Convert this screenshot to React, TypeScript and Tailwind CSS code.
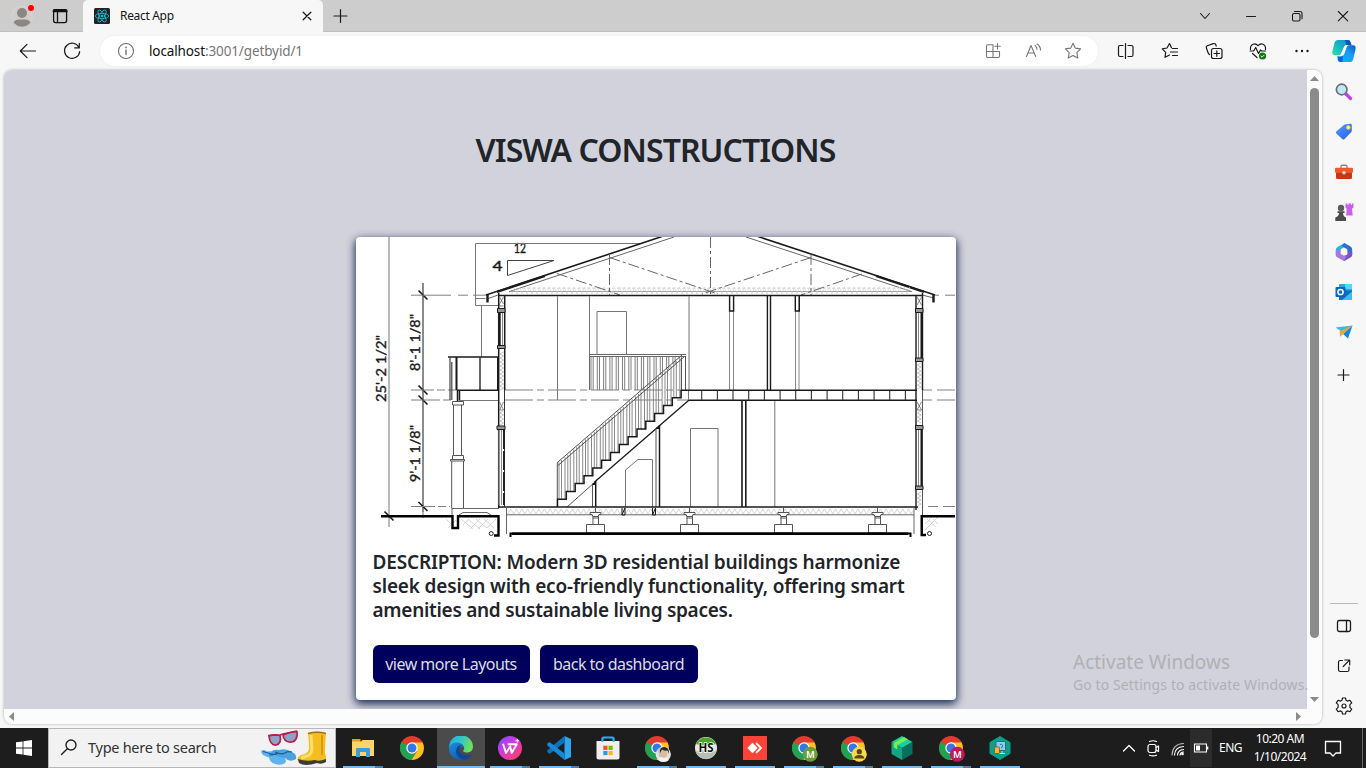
import React from "react";

const INK = "#1a1a1a";
const THIN = "#757575";

type IconProps = { children: React.ReactNode; size?: number; color?: string; sw?: number; className?: string };

function Icon({ children, size = 24, color = "#1b1b1b", sw = 1.1, className = "" }: IconProps) {
  return (
    <svg
      width={size}
      height={size}
      viewBox="0 0 24 24"
      fill="none"
      stroke={color}
      strokeWidth={sw}
      strokeLinecap="round"
      strokeLinejoin="round"
      className={"shrink-0 " + className}
    >
      {children}
    </svg>
  );
}

/* ---------- Tab strip ---------- */

function TabStrip() {
  return (
    <div className="flex h-8 shrink-0 bg-[#cdcdcd]">
      <div className="flex w-[83px] items-center border-b border-[#c0c0c0]">
        <svg width="24" height="24" viewBox="0 0 24 24" className="ml-[11px] shrink-0">
          <circle cx="11" cy="12.500" r="10.200" fill="#d3cdc9" stroke="#dcd6d2" />
          <circle cx="11" cy="9" r="5" fill="#8c8782" />
          <path d="M2.5 18.5Q4 15.5 8 15.5h6q4 0 5.500 3Q16 22.700 11 22.700T2.500 18.500z" fill="#8c8782" />
          <circle cx="20" cy="4" r="3.600" fill="#f00" stroke="#e8e4e2" strokeWidth=".8" />
        </svg>
        <Icon className="ml-[13px]" color="#111" sw={1.3}>
          <rect x="5.600" y="5.600" width="13" height="13" rx="2" />
          <path d="M5.600 7.300h13M5.800 6.200h12.600" strokeWidth="2" />
          <path d="M9.500 8v10.500" />
        </Icon>
      </div>
      <div className="flex w-60 items-center rounded-t-[5px] bg-[#f7f7f7]">
        <svg width="16" height="16" viewBox="0 0 16 16" className="ml-[11px] shrink-0">
          <rect width="16" height="16" rx="1.500" fill="#222" />
          <g fill="none" stroke="#16b9d4" strokeWidth=".85">
            <ellipse cx="8" cy="8" rx="6.800" ry="2.600" />
            <ellipse cx="8" cy="8" rx="6.800" ry="2.600" transform="rotate(60 8 8)" />
            <ellipse cx="8" cy="8" rx="6.800" ry="2.600" transform="rotate(120 8 8)" />
          </g>
          <circle cx="8" cy="8" r="1.300" fill="#16b9d4" />
        </svg>
        <span className="ml-[10px] flex-1 text-[12px] tracking-[-0.32px] text-[#161616]">React App</span>
        <Icon className="mr-[4px]" sw={1.3}>
          <path d="M8.200 8.200l7.600 7.600M15.800 8.200l-7.600 7.600" />
        </Icon>
      </div>
      <div className="flex flex-1 items-center border-b border-[#c0c0c0]">
        <Icon className="ml-[5px]" sw={1.2}>
          <path d="M12.500 5.500v13M6 12h13" />
        </Icon>
        <div className="flex-1" />
        <div className="flex w-[184px]">
          <div className="flex w-[46px] justify-center">
            <Icon sw={1.1}><path d="M7.500 9.500l4.500 5 4.500-5" /></Icon>
          </div>
          <div className="flex w-[46px] justify-center">
            <Icon sw={1.1}><path d="M7.500 12.500h9" /></Icon>
          </div>
          <div className="flex w-[46px] justify-center">
            <Icon sw={1.1}>
              <rect x="7.500" y="9.500" width="7.500" height="7.500" rx="1.500" />
              <path d="M9.500 7.500h5.500q2 0 2 2v5.300" />
            </Icon>
          </div>
          <div className="flex w-[46px] justify-center">
            <Icon sw={1.1}><path d="M7.300 7.500l9.400 9.400M16.700 7.500l-9.400 9.400" /></Icon>
          </div>
        </div>
      </div>
    </div>
  );
}

/* ---------- Toolbar ---------- */

const STAR = "M12 4.300l2.350 4.850 5.300.75-3.850 3.750.95 5.300L12 16.400l-4.750 2.550.95-5.300L4.350 9.900l5.300-.75z";

function Copilot() {
  return (
    <svg width="26" height="24" viewBox="0 0 26 24">
      <defs>
        <linearGradient id="cpA" x1="0" y1="1" x2="1" y2="0">
          <stop offset="0" stopColor="#2ee59d" />
          <stop offset=".45" stopColor="#19b6c4" />
          <stop offset="1" stopColor="#1488d8" />
        </linearGradient>
        <linearGradient id="cpB" x1="0" y1="1" x2="1" y2="0">
          <stop offset="0" stopColor="#14b8f0" />
          <stop offset=".6" stopColor="#1a9bf0" />
          <stop offset="1" stopColor="#0b55cf" />
        </linearGradient>
      </defs>
      <path d="M6.500 1h10q2.200 0 3 2.300l1 3h-5q-2 0-2.700 2l-2.300 6q-.8 2-3 2H4q-3.500 0-2.500-4.500l2-8Q4.300 1 6.500 1z" fill="url(#cpA)" />
      <path d="M14 1h3q2 0 2.600 2.300l.9 3h-3.500q-2 0-2-1.300z" fill="#0c56b8" />
      <path d="M19.500 23h-10q-2 0-2.700-2.300L6 17.300h3q3.300 0 4.100-2.300l2.200-6.500q.8-2.200 3-2.200H22q3.300 0 2.500 4.200l-2 8.500Q21.500 23 19.500 23z" fill="url(#cpB)" />
      <path d="M7 17.500h3q1.500-.2 2-1.500l-.5 7H9.500q-2 0-2.600-2z" fill="#1262d8" />
      <path d="M13.500 7.500q.5-1.200 2-1.200h2q-1.500.5-2 2L13 15q-.8 2-3 2.300H7.500q1.800-.5 2.500-2.500z" fill="#fff" />
    </svg>
  );
}

function Toolbar() {
  const cell = "flex w-11 justify-center";
  return (
    <div className="flex h-[38px] shrink-0 items-center bg-[#f7f7f7]">
      <div className="ml-[6px] flex w-11 justify-center">
        <Icon sw={1.2}><path d="M19.500 12H4.500M11 5.300L4.300 12l6.700 6.700" /></Icon>
      </div>
      <div className={cell}>
        <Icon sw={1.2}><path d="M18.900 8.300A7.600 7.600 0 1 0 19.700 12.500M19.300 4.300v4.600h-4.600" /></Icon>
      </div>
      <div className="ml-[6px] flex h-[30px] flex-1 items-center rounded-full bg-white shadow-[0_0_3px_rgba(0,0,0,0.06)]">
        <Icon color="#707070" sw={1.1} className="ml-[14px]">
          <circle cx="12" cy="12" r="7.500" />
          <path d="M12 11v4.500" strokeWidth="1.400" />
          <path d="M12 8.400v.1" strokeWidth="1.700" />
        </Icon>
        <div className="ml-[11px] flex-1 text-[13.5px] tracking-[-0.12px] text-[#767676]">
          <span className="text-[#111]">localhost</span>:3001/getbyid/1
        </div>
        <div className="mr-[5px] flex">
          <div className="flex w-10 justify-center">
            <Icon color="#777">
              <path d="M5.500 12.500h13M12 5.800v12.700M12 5.800H7q-1.500 0-1.500 1.500V17q0 1.500 1.500 1.500h10q1.500 0 1.500-1.500v-4.500M16.500 4.500v5.500M13.800 7.300h5.500" />
            </Icon>
          </div>
          <div className="flex w-10 justify-center">
            <Icon color="#777">
              <path d="M5.500 17.500L10 6.500l4.700 11M7 14h6.300M14 6.500q2 1.500 2 3.800M16 5q3.500 2.200 3.500 6" />
            </Icon>
          </div>
          <div className="flex w-10 justify-center">
            <Icon color="#777"><path d={STAR} /></Icon>
          </div>
        </div>
      </div>
      <div className="ml-[6px] flex">
        <div className={cell}>
          <Icon sw={1.2}>
            <path d="M11.500 4.500v15M9 6.500H6q-1.500 0-1.500 1.500v8q0 1.500 1.500 1.500h3M14 6.500h3.500q1.500 0 1.500 1.500v8q0 1.500-1.500 1.500H14" />
          </Icon>
        </div>
        <div className={cell}>
          <Icon sw={1.2}>
            <path d="M13.500 8.700L11.500 4.500 9 9l-4.700.8 3.400 3.500-.7 5 4.500-2.300M14.500 9.500h5M12.500 13h7M14.500 16.500h5" />
          </Icon>
        </div>
        <div className={cell}>
          <Icon sw={1.2}>
            <rect x="9.500" y="9.500" width="10.500" height="10" rx="2" />
            <path d="M14.800 11.800v5.500M12 14.500h5.500M7.500 15.500q-1-.5-1.500-2L4.300 8.800Q4 7.300 5.300 6.800l6-2.200q1.700-.4 2.500 1l.4 1.500" />
          </Icon>
        </div>
        <div className={cell}>
          <Icon sw={1.2}>
            <path d="M4.500 10.500q-.5-4 2.500-5.300 2.800-1 5 1.500 2.200-2.500 5-1.500 3 1.300 2.500 5.300M4 12h3.700l2-3.500 2.800 6 2-3.500 1 1h4M6.500 14.500l4.500 4" />
            <circle cx="16.500" cy="17" r="3.600" fill="#107c10" stroke="none" />
            <path d="M15 17.200l1 1 2-2" stroke="#fff" strokeWidth=".9" />
          </Icon>
        </div>
        <div className={cell}>
          <svg width="24" height="24" viewBox="0 0 24 24" fill="#1b1b1b">
            <circle cx="6.500" cy="12" r="1.200" /><circle cx="12" cy="12" r="1.200" /><circle cx="17.500" cy="12" r="1.200" />
          </svg>
        </div>
      </div>
      <div className="mr-[2px] flex w-10 justify-center"><Copilot /></div>
    </div>
  );
}

/* ---------- Building section drawing ---------- */

const RUN = 8.83;
const RISE = 7.8;

function stairPath() {
  let d = "M557.500 507";
  for (let i = 0; i < 15; i++) {
    d += `V${(507 - RISE * (i + 1)).toFixed(1)}`;
    if (i < 14) d += `H${(557.5 + RUN * (i + 1)).toFixed(1)}`;
  }
  return d;
}

function stairBalusters() {
  let d = "";
  for (let i = 0; i < 14; i++) {
    for (const off of [1.5, 4, 7.500]) {
      const x = 557.5 + RUN * i + off;
      d += `M${x.toFixed(1)} ${(464 - 0.862 * (x - 557)).toFixed(1)}V${(507 - RISE * (i + 1)).toFixed(1)}`;
    }
  }
  return d;
}

function landingBalusters() {
  let d = "";
  for (let x = 591; x < 684; x += 6.3) {
    const end = Math.min(390, 464 - 0.862 * (x - 557));
    d += `M${x.toFixed(1)} 356V${end.toFixed(1)}M${(x + 2.2).toFixed(1)} 356V${end.toFixed(1)}`;
  }
  return d;
}

function zigzag(x0: number, x1: number, top: number, bottom: number, step: number) {
  let d = `M${x0} ${bottom}`;
  let up = true;
  for (let x = x0 + step; x <= x1; x += step) {
    d += `L${x.toFixed(1)} ${up ? top : bottom}`;
    up = !up;
  }
  return d;
}

function BuildingSection() {
  const joists = Array.from({ length: 14 }, (_, i) => 701.7 + i * 15.67);
  const footings = [595.5, 689.5, 783.5, 877.5];
  return (
    <svg width="599" height="300" viewBox="356 237 599 300" fill="none" className="block rounded-t-[4px]">
      {/* dimension lines */}
      <path d="M389 237V527M423 283V518" stroke={THIN} />
      <path d="M423 283V512" stroke="#444" strokeWidth=".8" />
      <g stroke={INK} strokeWidth="1.600">
        <path d="M418.500 290.500l9 9M418.500 385.500l9 9M418.500 395.500l9 9M418.500 502l9 9M384.500 511.500l9 9" />
      </g>
      <g stroke="#808080">
        <path d="M411 295.200H451M458 295.200h10M473 295.200h14" />
        <path d="M411 390H434M437 390h8M448 390h9M411 400H440M443 400h8" />
        <path d="M411 506.500H450" strokeDasharray="24 3 8 3" />
        <path d="M505 390H681M505 400H688" strokeDasharray="28 4 7 4" />
        <path d="M935 295.200h4M945 295.200h11M923 390h9M937 390h19M923 400h9M937 400h19M928 506.500h10M943 506.500h13" />
      </g>
      <g fill="#181818" stroke="#181818" strokeWidth=".35" fontFamily="Lato, 'Liberation Sans', sans-serif" fontSize="13">
        <text x="514" y="252.500" textLength="12" lengthAdjust="spacingAndGlyphs">12</text>
        <text x="492.500" y="271" textLength="10" lengthAdjust="spacingAndGlyphs">4</text>
        <text transform="translate(386 402) rotate(-90)" textLength="67" lengthAdjust="spacingAndGlyphs">25'-2 1/2"</text>
        <text transform="translate(420 371) rotate(-90)" textLength="57" lengthAdjust="spacingAndGlyphs">8'-1 1/8"</text>
        <text transform="translate(420 482) rotate(-90)" textLength="57" lengthAdjust="spacingAndGlyphs">9'-1 1/8"</text>
      </g>
      {/* slope key */}
      <path d="M641 243.500H475.500V305.500H498M475.500 298.500h10M481.500 306V357" stroke="#777" />
      <path d="M507.500 260.500H554L507.500 275.500z" stroke="#444" />
      {/* roof */}
      <path d="M486 295L662 236.500M758 236.500L935 295" stroke={INK} strokeWidth="1.600" />
      <path d="M497 292L545 276M876 276L924 292" stroke={INK} strokeWidth="2.200" />
      <path d="M509 291.700L674 237M746 237L912 291.700M487 299l11-4M934 298l-12-3" stroke="#666" />
      <path d="M487.500 295v7.500M933.500 295v7.500" stroke={INK} strokeWidth="2.400" />
      <path d="M510 291.500H912" stroke="#888" strokeWidth=".9" />
      <path d={zigzag(512, 910, 287, 294, 2.5)} stroke="#d5d5d5" strokeWidth=".7" />
      <path d="M522 288.200H898" stroke="#d5d5d5" strokeDasharray="3 2" />
      <g stroke="#666" strokeDasharray="11 3 3 3">
        <path d="M557 273.500L620 295M609.500 257.500L718 294M710.500 237V294M811 257.500L702 294M862 274L801 295M609.500 254V295M811 254V295" />
      </g>
      <path d="M498 295.500H922" stroke={INK} strokeWidth="1.500" />
      {/* upper floor partitions */}
      <path d="M557.500 296V400M589.500 296V390M689 296V390M597 355V311.500H626.500V355" stroke={THIN} />
      <path d="M729.500 296V390M733.500 296V390M795.500 296V390M799 296V390" stroke="#888" />
      <path d="M729.600 296V311h4V296M795.300 296V311h4V296" stroke={INK} strokeWidth="1.400" />
      <path d="M767.400 296V390M770.500 296V390" stroke={INK} strokeWidth="1.400" />
      {/* railings and stairs */}
      <path d="M589 354.500H686M589 356.500H686M589.500 355V390" stroke="#666" />
      <path d={landingBalusters()} stroke="#707070" strokeWidth=".9" />
      <path d={stairBalusters()} stroke="#7c7c7c" strokeWidth=".9" />
      <path d="M557 462.800L682 355M558 465.500L684.500 356.500M557.300 463V507M681.500 358V390M685.500 356V390" stroke="#555" />
      <path d={stairPath()} stroke={INK} strokeWidth="1.500" />
      <path d="M567 507L595 482" stroke="#555" />
      <path d="M594 482.500L688.500 400.500" stroke={INK} strokeWidth="1.300" />
      {/* mid floor */}
      <path d="M681 390.300H917M688 400.300H917" stroke={INK} strokeWidth="1.600" />
      <path d={joists.map((x) => `M${x.toFixed(1)} 391v9`).join("")} stroke="#333" strokeWidth="1.100" />
      <path d="M688.500 391v9" stroke="#777" />
      {/* lower floor */}
      <path d="M592.500 484V507M656 429V507" stroke="#555" />
      <path d="M595.700 481V507M659.500 425V507" stroke={INK} strokeWidth="1.500" />
      <path d="M592.500 484h3M656.500 428h3" stroke={INK} strokeWidth="2" />
      <path d="M625.500 507V470L638 459.500H652.500V507M690.500 507V428.500H718V507M774.800 401V507" stroke={THIN} />
      <path d="M742 401V507M745.800 401V507" stroke={INK} strokeWidth="1.600" />
      {/* left wall */}
      <path d="M498.700 293V508M504.700 295V390" stroke={INK} strokeWidth="1.500" />
      <path d="M504.500 390V507" stroke="#333" />
      <path d={zigzag(0, 38, 500, 503.5, 2)} transform="matrix(0 1 1 0 0 352)" stroke="#aaa" strokeWidth=".7" />
      <path d={zigzag(0, 14, 500, 503.500, 2)} transform="matrix(0 1 1 0 0 411)" stroke="#aaa" strokeWidth=".7" />
      <path d="M499.500 297l4 7m0-7l-4 7v2h4M499.500 402l4 8m0-8l-4 8h4" stroke="#666" strokeWidth=".8" />
      <path d="M499.600 312V346" stroke={INK} strokeWidth="2.200" />
      <path d="M502.500 312V346M499 430V505M501.500 430V505" stroke="#888" />
      <path d="M504 430V505" stroke="#222" strokeWidth="2" strokeDasharray="19 2" />
      <path d="M497.500 308.500h7.500v4h-7.500zM497.500 345.500h7.500v3h-7.500zM497 426h8v3.500h-8z" stroke={INK} fill="#999" />
      {/* right wall */}
      <path d="M916 295V510M922.500 293V390" stroke={INK} strokeWidth="1.400" />
      <path d="M922.500 390V533" stroke="#555" />
      <path d={zigzag(0, 26, 917.5, 921, 2)} transform="matrix(0 1 1 0 0 363)" stroke="#aaa" strokeWidth=".7" />
      <path d={zigzag(0, 12, 917.5, 921, 2)} transform="matrix(0 1 1 0 0 411)" stroke="#aaa" strokeWidth=".7" />
      <path d={zigzag(0, 14, 917.5, 921, 2)} transform="matrix(0 1 1 0 0 492)" stroke="#aaa" strokeWidth=".7" />
      <path d="M917 297l4.500 8m0-8l-4.500 8M917 402l4.500 8m0-8l-4.500 8h4.500" stroke="#666" strokeWidth=".8" />
      <path d="M921.500 312V358M921.500 430V486" stroke={INK} strokeWidth="2" />
      <path d="M918.500 312V358M918.500 430V486" stroke="#888" />
      <path d="M915.500 308.500h7.500v4h-7.500zM915.500 358h7.500v3.500h-7.500zM915.500 425.500h7.500v4h-7.500zM915.500 486h7.500v3.500h-7.500z" stroke={INK} fill="#999" />
      {/* balcony and porch column */}
      <path d="M448 357H498" stroke={INK} strokeWidth="1.600" />
      <path d="M450 357V400M451.800 362V400" stroke="#444" strokeWidth="1.200" />
      <path d="M456.500 357V390M498 357V390" stroke={INK} strokeWidth="2" />
      <path d="M480 357V390" stroke="#333" strokeWidth="1.500" />
      <path d="M457 390.300H498" stroke={INK} strokeWidth="1.500" />
      <path d="M457.500 390V401M459.500 390V401" stroke={INK} strokeWidth="1.500" />
      <path d="M459 400.500H498" stroke="#777" />
      <path d="M452.500 401.500h11v3.500h-11zM453.500 405V455M461.500 405V455M452.500 455.500h11v4h-11zM450.500 459.500h14v1.500h-14zM451.700 461V508M463.500 461V508" stroke="#555" />
      <path d="M451.500 508.500H499M459 515L463 512.500H487L491 515M452 508.500v7" stroke="#666" />
      {/* ground floor and foundation */}
      <path d="M499 507H918" stroke={INK} strokeWidth="1.700" />
      <path d="M507 514.800H914M506.500 507V534M914 508V534" stroke="#666" />
      <path d={zigzag(508, 914, 509, 514, 2.8)} stroke="#c4c4c4" strokeWidth=".7" />
      <path d="M622 508v7h3v-7l-3 7M652.500 508v7h3v-7l-3 7" stroke={INK} />
      {footings.map((c) => (
        <g key={c} stroke="#555" fill="#fff">
          <path d={`M${c - 2.5} 514h5.500v11h-5.500z`} />
          <path d={`M${c - 5.500} 512.500h11v2h-2l-1 2h-5l-1-2h-2z`} />
          <path d={`M${c - 9} 524.500h18v8.500h-18z`} />
          <path d={`M${c} 507v5M${c - 2.800} 518h5.500`} />
        </g>
      ))}
      <path d="M512 533.700H908" stroke="#000" strokeWidth="2.400" />
      <path d="M510.500 537v-3.500H910.500V537" stroke="#000" strokeWidth="2" />
      <g stroke="#ccc" strokeWidth=".8">
        <path d="M446 519l5 5M448 528l8-8M461 519l12 10M468 519l12 10M476 519l11 9M484 519l10 9M463 525l6-6M470 529l10-10M478 529l10-10M487 528l9-9M925 524l7-7M925 530l13-13M927 519l9 8M933 519l5 5" />
      </g>
      <path d="M381 516.300H452.500V528H458V516.300H498.500V535.500H494" stroke="#000" strokeWidth="2.400" />
      <path d="M956 516.300H921.700V535H926" stroke="#000" strokeWidth="2.400" />
      <circle cx="491.200" cy="533.500" r="2" stroke="#222" fill="#fff" />
      <circle cx="929.500" cy="533.500" r="2" stroke="#222" fill="#fff" />
    </svg>
  );
}

/* ---------- Web page ---------- */

function Page() {
  return (
    <div className="relative flex flex-1 flex-col items-center overflow-hidden bg-[#d2d2dc]">
      <h1 className="mt-[60px] flex h-10 items-center whitespace-nowrap text-[32px] font-semibold tracking-[-0.95px] text-[#212529]">
        VISWA CONSTRUCTIONS
      </h1>
      <div className="mt-[67px] flex h-[463px] w-[600px] shrink-0 flex-col rounded-[4px] bg-white shadow-[0_3px_8px_1px_#1d2f55]">
        <BuildingSection />
        <div className="flex flex-col px-4 pt-[13px] text-[#212529]">
          <p className="pl-[1px] text-[19px] font-semibold leading-6">
            <span className="block whitespace-nowrap tracking-[-0.16px]">DESCRIPTION: Modern 3D residential buildings harmonize</span>
            <span className="block whitespace-nowrap tracking-[-0.17px]">sleek design with eco-friendly functionality, offering smart</span>
            <span className="block whitespace-nowrap tracking-[-0.28px]">amenities and sustainable living spaces.</span>
          </p>
          <div className="mt-[23px] flex gap-[10px] pl-[1px] text-[16px] tracking-[-0.52px] text-[#dcdce6]">
            <button className="h-[38px] w-[157px] whitespace-nowrap rounded-[6px] bg-[#00005c]">view more Layouts</button>
            <button className="h-[38px] w-[158px] whitespace-nowrap rounded-[6px] bg-[#00005c]">back to dashboard</button>
          </div>
        </div>
      </div>
    </div>
  );
}

function Viewport() {
  return (
    <div className="relative ml-1 flex h-[654px] w-[1318px] flex-col">
      <div className="flex h-full flex-col overflow-hidden rounded-[8px] bg-[#fcfcfc] shadow-[0_0_3px_rgba(0,0,0,0.3)]">
        <div className="flex h-[639px]">
          <Page />
          <div className="flex w-[15px] flex-col items-center">
            <svg width="9" height="5" viewBox="0 0 9 5" className="mt-[6px]"><path d="M0 5L4.500 0 9 5z" fill="#8b8b8b" /></svg>
            <div className="mt-[7px] h-[550px] w-[9px] rounded-full bg-[#8b8b8b]" />
            <svg width="9" height="5" viewBox="0 0 9 5" className="mt-[59px]"><path d="M0 0L4.500 5 9 0z" fill="#8b8b8b" /></svg>
          </div>
        </div>
        <div className="flex h-[15px] items-center justify-between pl-[5px] pr-[21px]">
          <svg width="5" height="9" viewBox="0 0 5 9"><path d="M5 0L0 4.500 5 9z" fill="#8b8b8b" /></svg>
          <svg width="5" height="9" viewBox="0 0 5 9"><path d="M0 0L5 4.500 0 9z" fill="#8b8b8b" /></svg>
        </div>
      </div>
      <div className="absolute left-[1069px] top-[579px] whitespace-nowrap text-[#b0b0b4]">
        <div className="h-[26px] text-[19px] leading-[26px]">Activate Windows</div>
        <div className="text-[14px] leading-[20px] tracking-[0.1px]">Go to Settings to activate Windows.</div>
      </div>
    </div>
  );
}

/* ---------- Edge sidebar ---------- */

function Sidebar() {
  const cell = "flex h-10 items-center justify-center";
  return (
    <div className="flex w-11 flex-col pt-[2px]">
      <div className={cell}>
        <svg width="20" height="20" viewBox="0 0 20 20">
          <path d="M12 12l4.500 4.500" stroke="#c93bf0" strokeWidth="3.200" strokeLinecap="round" />
          <circle cx="7.700" cy="7.500" r="5.300" fill="#c3e6fb" stroke="#6e6e6e" strokeWidth="1.700" />
        </svg>
      </div>
      <div className={cell}>
        <svg width="20" height="20" viewBox="0 0 20 20">
          <defs><linearGradient id="tag" x1="0" y1="0" x2="1" y2="1"><stop offset="0" stopColor="#4da0ff" /><stop offset="1" stopColor="#2a5bf0" /></linearGradient></defs>
          <path d="M10.500 2.500l6-.8q1.300 0 1.300 1.300v5.500q0 1-.7 1.700l-6.500 6.800q-1.200 1.200-2.400 0L2.300 11.500q-1-1.200.2-2.200z" fill="url(#tag)" />
          <circle cx="14.300" cy="5.500" r="2" fill="#fff3b0" stroke="#eab320" strokeWidth=".8" />
        </svg>
      </div>
      <div className={cell}>
        <svg width="20" height="20" viewBox="0 0 20 20">
          <path d="M7 6V4.300q0-1 1-1h4q1 0 1 1V6" fill="none" stroke="#8a8a8a" strokeWidth="1.400" />
          <rect x="1" y="5.700" width="18" height="5" rx="1" fill="#f0572b" />
          <path d="M2 10.500h16V15.500q0 1.500-1.500 1.500H3.500Q2 17 2 15.500z" fill="#c93808" />
          <circle cx="10" cy="10.700" r="1.800" fill="#d7d7d7" />
        </svg>
      </div>
      <div className={cell}>
        <svg width="20" height="20" viewBox="0 0 20 20">
          <path d="M11.500 1.500h2V3h1V1.500h2.500V3h1V1.500h1.500v4L18 6.700l.7 6.800H12.200l.5-6.800L11.500 5.500z" fill="#cf5cf2" />
          <circle cx="7" cy="6" r="3.200" fill="#5b5b5b" />
          <path d="M3.500 9.300h7V11H9q0 3 3 4.500V19H1.300V15.500Q5 14 5 11H3.500z" fill="#4c4c4c" />
        </svg>
      </div>
      <div className={cell}>
        <svg width="20" height="20" viewBox="0 0 20 20">
          <path d="M10.500 1L3.500 5q-1.700 1-1.700 2.700V13.500l5-3V7.300L13 3.500z" fill="#27b4e4" />
          <path d="M10.500 1l6 3.500q1.700 1 1.700 2.900v5.400l-5-3V7.300L7.500 4z" fill="#2d6ed3" />
          <path d="M18.200 10.500V13q0 1.500-1.400 2.300L10.500 19 6.300 16.300l6.900-3.800V8z" fill="#7455cf" />
          <path d="M1.800 8.500V13q0 1.400 1.400 2.200L10 19l2.500-5.500-5.700-2.600V7z" fill="#a67ad8" />
          <path d="M10 6.200l3.300 1.900v3.800L10 13.800l-3.300-1.900V8.100z" fill="#f7f7f7" />
        </svg>
      </div>
      <div className={cell}>
        <svg width="20" height="20" viewBox="0 0 20 20">
          <rect x="5" y="2" width="13" height="15" rx="1" fill="#28a8ea" />
          <path d="M11 2h7v5h-7z" fill="#50d9ff" />
          <path d="M5 8.500h13V18H5z" fill="#0f6cbf" />
          <path d="M18 9.500V18H8z" fill="#35c2f3" />
          <rect x="1.500" y="5" width="10" height="10" rx="1" fill="#0a66b8" />
          <circle cx="6.500" cy="10" r="2.600" fill="none" stroke="#fff" strokeWidth="1.500" />
        </svg>
      </div>
      <div className={cell}>
        <svg width="20" height="20" viewBox="0 0 20 20">
          <path d="M1.500 5.500L18.500 3.500 12 9.500 7.500 9.500z" fill="#39b7ee" />
          <path d="M18.500 3.500L14 16.500l-5-4.500z" fill="#1187d9" />
          <path d="M18.500 3.500L5.500 9.500l.7 5.500 2.800-3z" fill="#f0a431" />
        </svg>
      </div>
      <div className="flex h-[46px] items-center justify-center">
        <Icon sw={1.2}><path d="M11.500 6.500v11M6 12h11" /></Icon>
      </div>
      <div className="mx-auto mt-[205px] h-px w-7 shrink-0 bg-[#b9b9b9]" />
      <div className={"mt-[2px] " + cell}>
        <Icon sw={1.3}><rect x="5.500" y="6.500" width="13" height="11" rx="1.800" /><path d="M14.500 6.500v11" /></Icon>
      </div>
      <div className={cell}>
        <Icon sw={1.2}><path d="M10.500 6.500H8.300q-1.800 0-1.800 1.800V15.700q0 1.800 1.800 1.800h6.900q1.800 0 1.800-1.800V13M12.800 6h4.900v4.900M17.500 6.200l-6.300 6.300" /></Icon>
      </div>
      <div className={cell}>
        <Icon sw={1.2}>
          <path d="M10 6.200L10.500 4h3l.5 2.200 1.500.9 2.400-.8 1.800 2.600-1.800 1.700v2.800l1.800 1.700-1.800 2.600-2.400-.8-1.500.9-.5 2.200h-3l-.5-2.200-1.500-.9-2.400.8-1.800-2.600 1.800-1.700v-2.800L4.300 8.900l1.800-2.600 2.400.8z" />
          <circle cx="12" cy="12" r="2" />
        </Icon>
      </div>
    </div>
  );
}

/* ---------- Taskbar ---------- */

function ChromeMark() {
  return (
    <g>
      <circle cx="12" cy="12" r="12" fill="#e33b2e" />
      <path d="M12 12L1.600 6A12 12 0 0 0 11.500 24L17.200 15z" fill="#1ea352" />
      <path d="M12 12L17.200 15 11.500 24A12 12 0 0 0 22.500 6.500H12z" fill="#fcc31e" />
      <circle cx="12" cy="12" r="5.700" fill="#fff" />
      <circle cx="12" cy="12" r="4.500" fill="#3378e8" />
    </g>
  );
}

function ChromeProfile({ badge }: { badge?: React.ReactNode }) {
  return (
    <svg width="28" height="28" viewBox="-2 -2 28 28">
      <ChromeMark />
      {badge}
    </svg>
  );
}

function LetterBadge({ fill }: { fill: string }) {
  return (
    <g>
      <circle cx="18.300" cy="18.300" r="7.500" fill={fill} />
      <text x="18.300" y="21.700" textAnchor="middle" fontSize="9.500" fill="#fff" fontWeight="500" fontFamily="Roboto, sans-serif">M</text>
    </g>
  );
}

type App = { id: string; state: "none" | "single" | "stack" | "active"; art: React.ReactNode };

const APPS: App[] = [
  {
    id: "explorer", state: "stack", art: (
      <svg width="24" height="24" viewBox="0 0 24 24">
        <path d="M1 3h8.500v4H1z" fill="#e0a21a" />
        <path d="M1 5.500h9L11.500 4H23v16H1z" fill="#fcd467" />
        <path d="M5 21v-8q0-1 1-1h12q1 0 1 1v8h-4v-5H9v5z" fill="#3b9be3" />
      </svg>
    ),
  },
  { id: "chrome", state: "none", art: <ChromeProfile /> },
  {
    id: "edge", state: "active", art: (
      <svg width="24" height="24" viewBox="0 0 24 24">
        <defs>
          <linearGradient id="edgeTop" x1="0" y1="0" x2="1" y2=".3"><stop offset="0" stopColor="#25a9e8" /><stop offset=".55" stopColor="#35c5c8" /><stop offset="1" stopColor="#6be05d" /></linearGradient>
          <linearGradient id="edgeLow" x1="0" y1="0" x2="1" y2="1"><stop offset="0" stopColor="#1b8fe0" /><stop offset="1" stopColor="#0c4a9e" /></linearGradient>
        </defs>
        <path d="M0 11A12 11.500 0 0 1 24 10.500Q24 16 18.500 16.500 13.500 16.500 14.300 14.500 15.800 13 14.800 11L0 11z" fill="url(#edgeTop)" />
        <path d="M0 11Q2.500 6 9 6.500 14.500 7.500 15 11.500 12 9.500 10 12 8 17 13 20 18 22 22.300 17.800 19 24 12.500 24 0 23.500 0 11z" fill="url(#edgeLow)" />
        <path d="M9.500 10Q6 13 7.500 18 10 23.300 16 23.400 20.500 22 22.300 17.900 17.500 20.500 13 18.300 9 15.500 10.500 11.500 12 9.500 14.500 11 12.500 8 9.500 10z" fill="#10459a" />
      </svg>
    ),
  },
  {
    id: "wps", state: "stack", art: (
      <svg width="24" height="24" viewBox="0 0 24 24">
        <defs><linearGradient id="wps" x1="0" y1="0" x2=".8" y2="1"><stop offset="0" stopColor="#7550ff" /><stop offset=".5" stopColor="#dc35dc" /><stop offset="1" stopColor="#ff3f63" /></linearGradient></defs>
        <circle cx="12" cy="12" r="12" fill="url(#wps)" />
        <path d="M5 7.800l3 9.200 4.200-6.500 1.500 6.500 5-8.700H9.700" fill="none" stroke="#fff" strokeWidth="1.900" strokeLinejoin="round" />
        <path d="M19.300 3v3.600M17.500 4.800h3.600" stroke="#fff" />
      </svg>
    ),
  },
  {
    id: "code", state: "stack", art: (
      <svg width="24" height="24" viewBox="0 0 24 24">
        <path d="M17.500 0L24 3v18l-6.500 3z" fill="#2fa5ee" />
        <path d="M17.500 0v6.500L2.500 18 .3 16v-1.800z" fill="#0b72bd" />
        <path d="M17.500 24v-6.500L2.500 6 .3 7.500v2z" fill="#1689d6" />
      </svg>
    ),
  },
  {
    id: "store", state: "none", art: (
      <svg width="24" height="24" viewBox="0 0 24 24">
        <path d="M6.500 6V2.500q0-1 1-1h9q1 0 1 1V6" fill="none" stroke="#25b3ea" strokeWidth="1.800" />
        <path d="M.5 5h23v16.500q0 2-2 2h-19q-2 0-2-2z" fill="#efefef" />
        <path d="M6.500 1.500V6M17.500 1.500V6" stroke="#25b3ea" strokeWidth="1.800" />
        <path d="M7.300 9.700h4.200v4.200H7.300z" fill="#ef5326" /><path d="M12.500 9.700h4.200v4.200h-4.200z" fill="#7cb900" />
        <path d="M7.300 14.900h4.200v4.200H7.300z" fill="#1c9fe4" /><path d="M12.500 14.900h4.200v4.200h-4.200z" fill="#fdb812" />
      </svg>
    ),
  },
  {
    id: "chrome-photo", state: "stack", art: (
      <ChromeProfile badge={
        <g>
          <circle cx="18.300" cy="18.300" r="7.600" fill="#dfe6e3" />
          <path d="M12.500 13.500q3-3 6-2.500l-1 11-3-1z" fill="#b4c5c2" />
          <path d="M13.500 24.500q0-3.500 5-4 5 .5 5 4-5 2.500-10 0z" fill="#f2f2f2" />
          <ellipse cx="19" cy="17.500" rx="3.400" ry="4.300" fill="#e3b799" />
          <path d="M15 17q-.8-6 4.500-6 5 .5 4.500 7l-1.500-3.500q-4 .5-5.500-1z" fill="#2c2624" />
        </g>
      } />
    ),
  },
  {
    id: "hs", state: "single", art: (
      <svg width="24" height="24" viewBox="0 0 24 24">
        <circle cx="12" cy="12" r="11" fill="#e4e8e0" />
        <path d="M2 8A11 11 0 0 1 22 8Q12 11 2 8z" fill="#4aa827" />
        <path d="M1.500 15.500Q12 12.500 22.500 15.500A11 11 0 0 1 1.500 15.500z" fill="#b9bfb5" />
        <text x="12" y="16" textAnchor="middle" fontSize="11.500" fontWeight="700" fill="#111" stroke="#fff" strokeWidth="1.400" paintOrder="stroke" fontFamily="'Noto Sans', sans-serif">HS</text>
      </svg>
    ),
  },
  {
    id: "anydesk", state: "single", art: (
      <svg width="24" height="24" viewBox="0 0 24 24">
        <path d="M0 0h24v24H0z" fill="#fb4338" />
        <path d="M4.300 12L9.500 6.800l5.200 5.200-5.200 5.200z" fill="#fff" />
        <path d="M12.700 7.200l4.800 4.800-4.800 4.800" transform="translate(.5 0)" fill="none" stroke="#fff" strokeWidth="1.900" />
      </svg>
    ),
  },
  { id: "chrome-green", state: "stack", art: <ChromeProfile badge={<LetterBadge fill="#689f38" />} /> },
  {
    id: "chrome-yellow", state: "stack", art: (
      <ChromeProfile badge={
        <g>
          <circle cx="18.300" cy="18.300" r="7.500" fill="#fbd851" />
          <circle cx="18.300" cy="15.700" r="2.600" fill="#5c4810" />
          <path d="M13.300 22.500q0-3.500 5-3.500t5 3.500z" fill="#5c4810" />
        </g>
      } />
    ),
  },
  {
    id: "package", state: "single", art: (
      <svg width="24" height="24" viewBox="0 0 24 24">
        <path d="M12 0l10.500 6L12 12 1.500 6z" fill="#19cf9d" />
        <path d="M1.500 6L12 12v12L1.500 18z" fill="#14a684" />
        <path d="M22.500 6L12 12v12l10.500-6z" fill="#067060" />
        <path d="M14 1.100l3.800 2.200L7.300 9.300v4.200L3.700 11.300V7.200z" fill="#74ef4e" />
      </svg>
    ),
  },
  { id: "chrome-pink", state: "stack", art: <ChromeProfile badge={<LetterBadge fill="#c2185b" />} /> },
  {
    id: "hex", state: "single", art: (
      <svg width="24" height="24" viewBox="0 0 24 24">
        <path d="M12 .5l10 6v11l-10 6-10-6v-11z" fill="#0d9f8b" stroke="#0d9f8b" strokeLinejoin="round" />
        <rect x="8" y="5.500" width="9.500" height="9" rx=".8" fill="#85d0ef" stroke="#3e6270" />
        <path d="M11 17.500h6M14 15v2.500" stroke="#b9dde0" strokeWidth="1" />
        <rect x="6.500" y="11" width="5" height="6.500" rx=".7" fill="#f5b73c" stroke="#8a4a2e" strokeWidth=".8" />
        <path d="M12 8.500q2-1 2.500 1t-1.500 2.500" stroke="#2677a8" fill="none" />
      </svg>
    ),
  },
];

function TaskButton({ app }: { app: App }) {
  return (
    <div className={"flex h-10 w-12 flex-col items-center " + (app.state === "active" ? "bg-[#4b4b4b]" : "")}>
      <div className="flex h-[38px] items-center justify-center pt-[2px]">{app.art}</div>
      {app.state === "active" && <div className="h-[2px] w-12 bg-[#76b9ed]" />}
      {app.state === "single" && <div className="h-[2px] w-10 bg-[#76b9ed]" />}
      {app.state === "stack" && (
        <div className="flex h-[2px] w-10">
          <div className="w-8 bg-[#76b9ed]" />
          <div className="w-2 bg-[#527fa3]" />
        </div>
      )}
    </div>
  );
}

function SearchArt() {
  return (
    <svg width="68" height="36" viewBox="0 0 68 36">
      <g stroke="#b81f4b" strokeWidth="1.700" fill="#8fa3c8" strokeLinejoin="round">
        <path d="M9 6q5-2 11-.5 2 8-4 9.500-6 .5-7-9z" />
        <path d="M23 5q6-3 14-3.500 1 9-5 10.500-8 1-9-7z" />
        <path d="M8 5.500L20 5l3-1 14-3" fill="none" />
      </g>
      <path d="M1 21q2-2 6 .5 5-1 7 1 12 3 12 9-2 4-9 3-7-1-8-7-8-2-8-6.500z" fill="#5db5ec" />
      <path d="M11 22q2-3 8-2 7-2 13 2 5 2 4 7-6 4-11-1-8-1-9-3z" fill="#4aa3df" />
      <path d="M3 21.500q9 3 13 3 2-2 0-2M9 25q6 0 9-2M15 22q6 3 10 1 2-2 7-1" stroke="#1d5c98" strokeWidth="1.200" fill="none" />
      <path d="M48 3q9-3 18 0-1 12-1 20 2 6 0 9-5 2-9-1-8 4-17 1-4-4 2-7 7-1 8-6 0-8-1-16z" fill="#f5bd1f" />
      <path d="M51 5l1 15q-1 6-8 7l-3 1" stroke="#fbdf68" strokeWidth="3" fill="none" />
      <path d="M62 5v20" stroke="#dd990c" strokeWidth="2" />
      <path d="M38 29q8 3 17 1 4 2 11-1v3q-5 3-9 1-12 4-18 0z" fill="#3e3a30" />
      <path d="M48 3.500q9-2.500 18 0" stroke="#9a741c" strokeWidth="1.300" fill="none" />
    </svg>
  );
}

function Taskbar() {
  return (
    <div className="flex h-10 shrink-0 bg-[#1d1d1d] text-white">
      <div className="flex w-12 items-center justify-center">
        <svg width="16" height="16" viewBox="0 0 16 16" fill="#fff">
          <path d="M0 2.300L6.600 1.400v6.200H0zM7.400 1.300L16 0v7.600H7.400zM0 8.400h6.600v6.200L0 13.700zM7.400 8.400H16V16l-8.600-1.300z" />
        </svg>
      </div>
      <div className="flex w-72 items-center border border-[#b7b7b7] bg-[#f2f2f2]">
        <Icon sw={1.4} color="#222" className="ml-[7px]"><circle cx="15" cy="9" r="5" /><path d="M11.300 12.700L5.500 18.500" /></Icon>
        <span className="ml-[8px] flex-1 whitespace-nowrap text-[14.5px] tracking-[-0.27px] text-[#333]">Type here to search</span>
        <div className="mr-[7px]"><SearchArt /></div>
      </div>
      <div className="ml-[3px] flex gap-px">
        {APPS.map((a) => <TaskButton key={a.id} app={a} />)}
      </div>
      <div className="flex-1" />
      <div className="flex w-[249px] items-center">
        <Icon color="#fff" sw={1.3}><path d="M6.500 15L12 9.500l5.500 5.500" /></Icon>
        <Icon color="#fff" sw={1.2}>
          <rect x="7" y="8.500" width="8" height="8" rx="2" />
          <path d="M15 11.500l2.500-1.500v5.500L15 14M8.500 5.500q3.500-1.500 7 0M8.500 19.200q3.500 1.500 7 0" />
        </Icon>
        <Icon color="#fff" sw={1.2} className="ml-[1px]">
          <path d="M6 19Q6.500 8 17.500 7.500" stroke="#b5b5b5" />
          <path d="M8.500 19Q9 11 17.500 10.500M11.500 19Q12 14 17.500 13.500M14 19q.5-2.700 3.500-3" />
          <circle cx="16.500" cy="18" r="1.300" fill="#fff" stroke="none" />
        </Icon>
        <div className="flex h-[38px] w-[22px] items-center justify-center bg-[#2b2b2b]">
          <svg width="16" height="10" viewBox="0 0 16 10">
            <path d="M1.500 1h12v8h-12z" fill="none" stroke="#fff" strokeWidth="1.100" />
            <path d="M3 2.500h4v5H3zM14 3.500h1.300v3H14z" fill="#fff" />
          </svg>
        </div>
        <span className="ml-[7px] w-[25px] text-[12px] tracking-[-0.5px]">ENG</span>
        <div className="ml-[6px] w-[60px] whitespace-nowrap text-center text-[12px] leading-[18px] tracking-[-0.5px]">
          <div>10:20 AM</div>
          <div>1/10/2024</div>
        </div>
        <Icon color="#fff" sw={1.3} className="ml-[11px]">
          <path d="M4.500 5.500h15v11.500H15L12 20l-3-3H4.500z" strokeLinejoin="miter" />
        </Icon>
        <div className="ml-[17px] h-10 w-px bg-[#6a6a6a]" />
      </div>
    </div>
  );
}

export default function App() {
  return (
    <div className="flex h-[768px] w-[1366px] flex-col overflow-hidden bg-[#f7f7f7] font-['Noto_Sans','Open_Sans',sans-serif]">
      <TabStrip />
      <Toolbar />
      <div className="flex h-[658px] shrink-0">
        <Viewport />
        <Sidebar />
      </div>
      <Taskbar />
    </div>
  );
}
